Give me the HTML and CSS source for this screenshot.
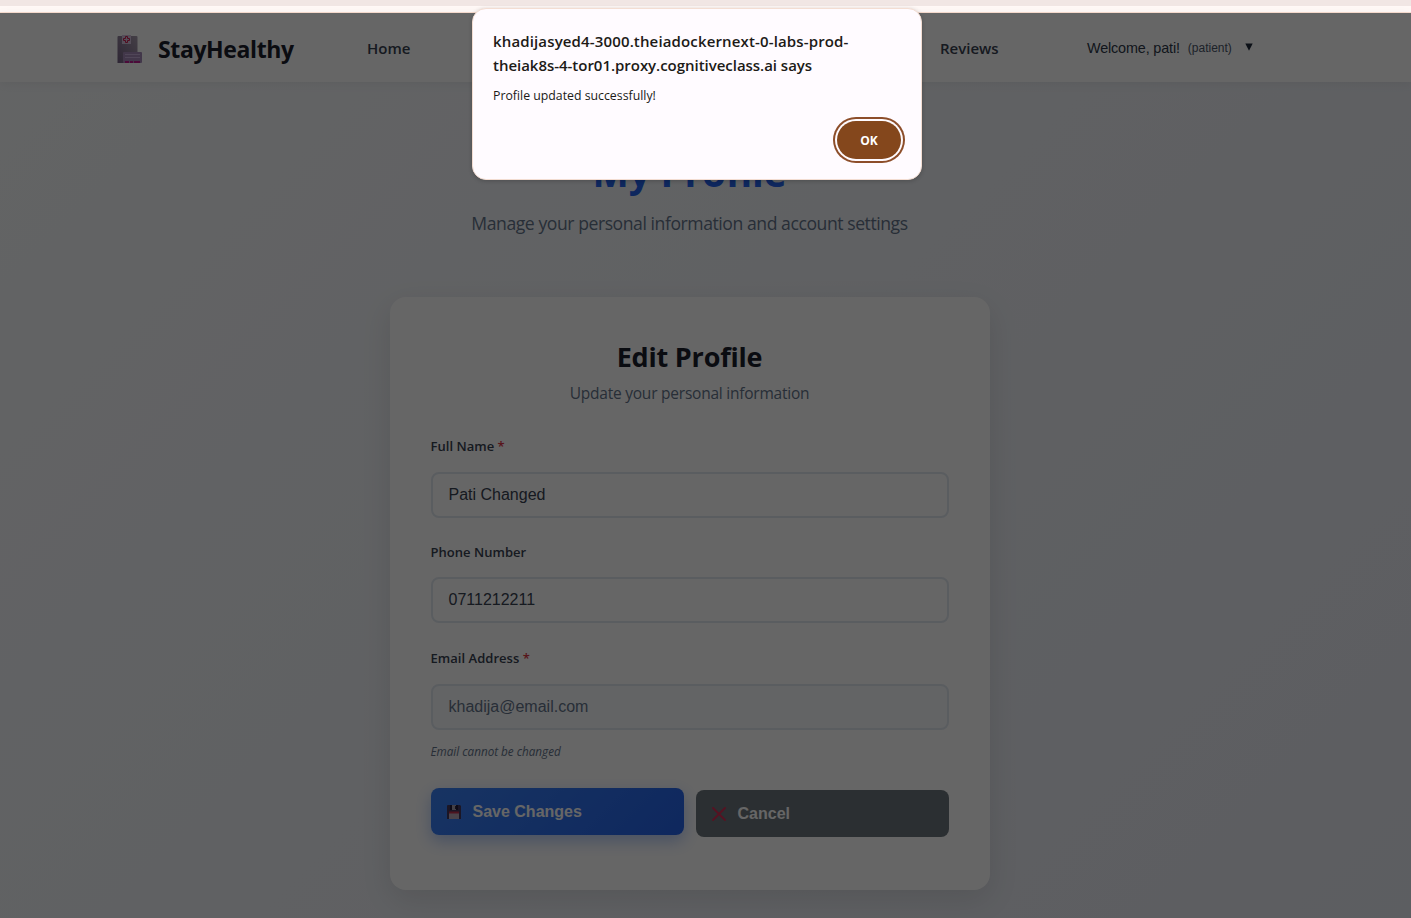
FILE: index.html
```html
<!DOCTYPE html>
<html lang="en">
<head>
<meta charset="utf-8">
<title>StayHealthy</title>
<link rel="stylesheet" href="styles.css">
</head>
<body>
<div class="toolbar"></div>
<div class="page">
  <header class="navbar">
    <div class="brand">
      <svg class="brand-icon" width="26" height="28" viewBox="0 0 26 28">
        <defs><linearGradient id="tower" x1="0" y1="1" x2="1" y2="0"><stop offset="0" stop-color="#746084"/><stop offset="1" stop-color="#a99daf"/></linearGradient></defs>
        <path d="M1.500 1h18a1 1 0 0 1 1 1v26H.5V2a1 1 0 0 1 1-1z" fill="url(#tower)"/>
        <rect x="5" y="0" width="9" height="9" fill="#d4c4df"/>
        <path d="M8.500 1.500h2v2h2v2h-2v2h-2v-2h-2v-2h2z" fill="none" stroke="#ca2050" stroke-width="1"/>
        <rect x="6" y="17" width="19" height="11" rx="1" fill="#a58bba"/>
        <path d="M8 19h15v1H8zM8 22h15v1H8z" fill="#c9afdc"/>
        <path d="M8 26h4v2H8zM13 26h3v2h-3zM17 26h6v2h-6z" fill="#be1a8f"/>
      </svg>
      <span class="brand-name">StayHealthy</span>
    </div>
    <nav class="links"><a class="link">Home</a><a class="link reviews">Reviews</a></nav>
    <div class="user"><span class="welcome">Welcome, pati!</span><span class="role">(patient)</span>
      <svg class="caret" width="8" height="8" viewBox="0 0 8 8"><path d="M.3.500h7.400L4 7.700z" fill="#1e293b"/></svg>
    </div>
  </header>
  <main class="main">
    <h1 class="title">My Profile</h1>
    <p class="subtitle">Manage your personal information and account settings</p>
    <section class="card">
      <h2 class="card-title">Edit Profile</h2>
      <p class="card-sub">Update your personal information</p>
      <div class="field"><div class="label">Full Name <b class="req">*</b></div><div class="input">Pati Changed</div></div>
      <div class="field phone"><div class="label">Phone Number</div><div class="input">0711212211</div></div>
      <div class="field email"><div class="label">Email Address <b class="req">*</b></div><div class="input disabled">khadija@email.com</div></div>
      <div class="hint">Email cannot be changed</div>
      <div class="actions">
        <div class="btn save">
          <svg class="btn-icon" width="14" height="14" viewBox="0 0 14 14">
            <path d="M.5 0H13l1 1v13H0V.5z" fill="#45385c"/><path d="M3 0h8v5H3z" fill="#241c38"/><path d="M5 0h4v5H5z" fill="#a8a0ae"/><path d="M8 1h1v3H8z" fill="#332840"/><path d="M2 7h10v7H2z" fill="#b8a9ba"/><path d="M2 6.500h10v2H2z" fill="#c0304e"/>
          </svg><span>Save Changes</span>
        </div>
        <div class="btn cancel">
          <svg class="btn-icon" width="14" height="14" viewBox="0 0 14 14"><path d="M1 1l12 12M13 1L1 13" stroke="#d62f55" stroke-width="1.900" stroke-linecap="round"/></svg><span>Cancel</span>
        </div>
      </div>
    </section>
  </main>
</div>
<div class="overlay"></div>
<div class="dialog" role="alertdialog">
  <div class="host"><div class="host-a">khadijasyed4-3000.theiadockernext-0-labs-prod-</div><div class="host-b">theiak8s-4-tor01.proxy.cognitiveclass.ai says</div></div>
  <div class="message">Profile updated successfully!</div>
  <div class="ok">OK</div>
</div>
</body>
</html>
```
FILE: styles.css
```css
* { box-sizing: border-box; }
body { margin: 0; height: 918px; overflow: hidden; font-family: "Open Sans", "Noto Sans", sans-serif; color: #1e293b; }
h1, h2, p { margin: 0; }
.toolbar { height: 13px; background: linear-gradient(#f1e6e4 6px, #fff8f6 6px, #fff8f6 12px, #f8ddd0 12px); }
.page { height: 905px; background: linear-gradient(135deg, #f8fafc 0%, #e7eaf2 100%); white-space: nowrap; }
.navbar { height: 69px; display: flex; align-items: center; background: #fff; box-shadow: 0 2px 10px rgba(0,0,0,.06); padding: 2px 0 0 117px; }
.brand { display: flex; align-items: center; width: 250px; }
.brand-icon { margin-right: 15px; }
.brand-name { font-size: 23px; font-weight: 700; letter-spacing: -.38px; color: #1a202c; }
.links { display: flex; width: 720px; font-size: 15px; font-weight: 600; color: #374151; line-height: 20px; margin-top: -2px; }
.link { width: 573px; }
.reviews { width: auto; }
.user { display: flex; align-items: center; margin-top: -2px; font-family: "Liberation Sans", Arial, sans-serif; font-size: 14.400px; letter-spacing: -.15px; color: #2d3748; }
.role { font-size: 12px; color: #4a5568; margin-left: 8px; letter-spacing: 0; }
.caret { margin: -2px 0 0 13px; }
.main { display: flex; flex-direction: column; align-items: center; width: 1379px; padding-top: 60px; }
.title { font-size: 38.500px; font-weight: 700; line-height: 60px; color: #2563eb; letter-spacing: -.1px; }
.subtitle { font-size: 17.600px; line-height: 28px; margin-top: 7px; color: #64748b; letter-spacing: -.44px; }
.card { width: 600px; height: 593px; margin-top: 60px; padding: 39px 41px; background: #fff; border-radius: 16px; box-shadow: 0 10px 30px rgba(0,0,0,.1); display: flex; flex-direction: column; }
.card-title { font-size: 27px; line-height: 42px; text-align: center; color: #1a202c; letter-spacing: -.2px; }
.card-sub { font-size: 15.500px; line-height: 24px; margin-top: 3px; text-align: center; color: #64748b; letter-spacing: -.23px; }
.field { margin-top: 30px; height: 76px; }
.card-sub + .field { margin-top: 31px; }
.card-sub + .field .label, .email .label { margin-bottom: 16px; }
.email { height: 77px; }
.label { font-size: 13px; font-weight: 600; line-height: 20px; color: #374151; margin-bottom: 15px; letter-spacing: .03px; }
.req { color: #dc3545; font-weight: 600; }
.input { height: 46px; padding: 0 16px; border: 2px solid #e2e8f0; border-radius: 8px; font: 16px/42px "Liberation Sans", Arial, sans-serif; letter-spacing: 0; color: #374151; }
.disabled { background: #f8fafc; color: #64748b; }
.hint { font-size: 11.700px; line-height: 16px; margin-top: 18px; font-style: italic; color: #64748b; }
.actions { display: grid; grid-template-columns: 253px 253px; gap: 12px; margin-top: 29px; }
.btn { height: 47px; border-radius: 8px; display: flex; align-items: center; padding-left: 16px; color: #fff; font: bold 16px "Liberation Sans", Arial, sans-serif; }
.btn-icon { margin-right: 12px; }
.save { background: linear-gradient(135deg, #3b82f6, #2563eb); box-shadow: 0 6px 16px rgba(37,99,235,.35); }
.cancel { background: #6c757d; margin-top: 2px; height: 47px; }
.overlay { position: absolute; inset: 13px 0 0; background: rgba(0,0,0,.6); }
.dialog { position: absolute; left: 472px; top: 8px; width: 450px; height: 172px; background: #fffbff; border: 1px solid #f3ddd2; border-radius: 14px; box-shadow: 0 1px 4px rgba(0,0,0,.2); padding: 20px 20px; display: flex; flex-direction: column; white-space: nowrap; color: #201a17; }
.host { font-size: 15px; font-weight: 600; line-height: 24px; }
.host-a { letter-spacing: .14px; }
.host-b { letter-spacing: -.03px; }
.message { font-size: 12.300px; line-height: 20px; margin-top: 9px; }
.ok { align-self: flex-end; width: 64px; height: 38px; margin: 15px 0 0; border-radius: 19px; background: #84471c; color: #fff; font-size: 12px; font-weight: 700; line-height: 39px; text-align: center; box-shadow: 0 0 0 2px #fffbff, 0 0 0 4px #8d4e2a; }
```
